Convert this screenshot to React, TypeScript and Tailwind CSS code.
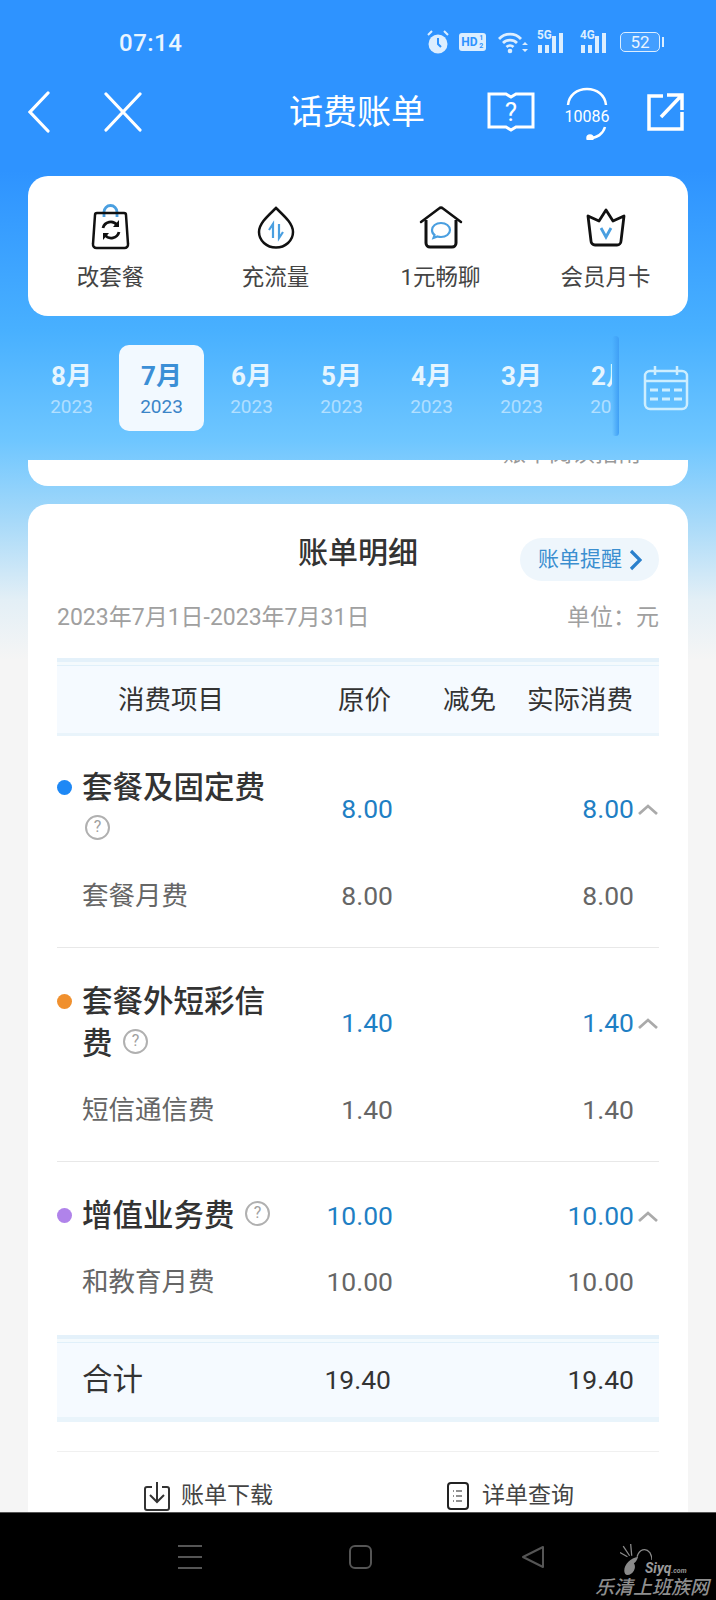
import React from 'react';

const months = [
  { m: '8月', y: '2023' },
  { m: '7月', y: '2023', active: true },
  { m: '6月', y: '2023' },
  { m: '5月', y: '2023' },
  { m: '4月', y: '2023' },
  { m: '3月', y: '2023' },
  { m: '2月', y: '2023' },
];

const Help = () => (
  <span className="inline-flex ml-[3px] w-[25px] h-[25px] rounded-full border-2 border-[#b0b0b0] items-center justify-center text-[#a0a0a0] text-[16px] font-normal leading-none align-[8px]">?</span>
);

const Alarm = () => (
  <svg width="22" height="24" viewBox="0 0 22 24" fill="none">
    <circle cx="11" cy="14" r="9.500" fill="#dceeff" />
    <path d="M11 8v6l3 3" stroke="#2e93ff" strokeWidth="2" />
    <path d="M1 5l4-4M21 5l-4-4" stroke="#dceeff" strokeWidth="2" />
  </svg>
);

const Signal = ({ label }: { label: string }) => (
  <div className="relative w-[30px] h-[22px] flex items-end gap-[3px] pl-[1px]">
    <span className="w-[4px] h-[8px] bg-[#dceeff]" />
    <span className="w-[4px] h-[8px] bg-[#dceeff]" />
    <span className="w-[4px] h-[17px] bg-[#dceeff]" />
    <span className="w-[4px] h-[20px] bg-[#dceeff]" />
    <span className="absolute left-0 top-[-3px] text-[13px] leading-[13px] font-bold text-[#dceeff] scale-x-90 origin-left">{label}</span>
  </div>
);

const BagIcon = () => (
  <svg width="40" height="46" viewBox="0 0 40 46" fill="none">
    <path d="M13 13V8a6.500 6.500 0 0 1 13 0v5" stroke="#4a9fe0" strokeWidth="2.800" />
    <path d="M6 9h27a2 2 0 0 1 2 2l2 29a3.500 3.500 0 0 1-3.500 4H5.500A3.500 3.500 0 0 1 2 40l2-29a2 2 0 0 1 2-2z" stroke="#111" strokeWidth="2.500" />
    <path d="M12 24a8 8 0 0 1 14-3M28 28a8 8 0 0 1-14 3" stroke="#111" strokeWidth="2.800" />
    <path d="M28 16v7h-6zM12 36v-7h6z" fill="#111" />
  </svg>
);

const DropIcon = () => (
  <svg width="38" height="44" viewBox="0 0 38 44" fill="none">
    <path d="M19 3C12 10 2 18 2 27a17 15.500 0 0 0 34 0C36 18 26 10 19 3z" stroke="#111" strokeWidth="2.500" />
    <path d="M16 33V19l-4 6M22 19v14l4-6" stroke="#4a9fe0" strokeWidth="2.200" />
  </svg>
);

const HouseIcon = () => (
  <svg width="44" height="44" viewBox="0 0 44 44" fill="none">
    <path d="M2 17L20 3.500a3 3 0 0 1 4 0L42 17" stroke="#111" strokeWidth="2.500" strokeLinecap="round" />
    <path d="M7 15v23a4 4 0 0 0 4 4h22a4 4 0 0 0 4-4V15" stroke="#111" strokeWidth="3" />
    <path d="M22 18c-5 0-9 3-9 7 0 2 1 4 2.500 5l-1 3 4-1.500c1 .3 2 .5 3.500.5 5 0 9-3 9-7s-4-7-9-7z" stroke="#4a9fe0" strokeWidth="2.200" />
  </svg>
);

const CrownIcon = () => (
  <svg width="42" height="40" viewBox="0 0 42 40" fill="none">
    <path d="M21 3l7 11 11-5-3 25a4 4 0 0 1-4 4H10a4 4 0 0 1-4-4L3 9l11 5z" stroke="#111" strokeWidth="2.800" strokeLinejoin="round" />
    <path d="M16 21l5 9 5-9" stroke="#4a9fe0" strokeWidth="2.800" />
  </svg>
);

const quick = [
  { label: '改套餐', icon: <BagIcon /> },
  { label: '充流量', icon: <DropIcon /> },
  { label: '1元畅聊', icon: <HouseIcon /> },
  { label: '会员月卡', icon: <CrownIcon /> },
];

const Caret = () => (
  <svg width="25" height="14" viewBox="0 0 25 14" fill="none" stroke="#aaaaaa" strokeWidth="2.800">
    <path d="M5 12l9-8 9 8" />
  </svg>
);

const Row = ({ dot, name, price, actual, sub, subPrice, subActual }: { dot: string; name: string; price: string; actual: string; sub: string; subPrice: string; subActual: string }) => (
  <div>
    <div className="flex items-center">
      <div className="w-[25px] self-start pt-[13px]"><div className={`w-[15px] h-[15px] rounded-full ${dot}`} /></div>
      <div className="w-[191px] text-[30.500px] leading-[42px] font-medium text-[#333333]">{name} <Help /></div>
      <div className="w-[120px] text-right text-[26.500px] text-[#1f7fc4]">{price}</div>
      <div className="flex-1 text-right text-[26.500px] text-[#1f7fc4]">{actual}</div>
      <Caret />
    </div>
    <div className="flex items-center mt-[24px] h-[42px] text-[26.500px] text-[#666666]">
      <div className="w-[25px]" />
      <div className="w-[191px]">{sub}</div>
      <div className="w-[120px] text-right">{subPrice}</div>
      <div className="flex-1 text-right pr-[25px]">{subActual}</div>
    </div>
  </div>
);

export default function App() {
  return (
    <div className="relative w-[716px] h-[1600px] overflow-hidden flex flex-col bg-[linear-gradient(180deg,#2e93ff_0px,#2e93ff_170px,#48b0ff_330px,#6ec6ff_440px,#a6d9f9_520px,#e3eff6_600px,#f5f5f5_660px)] font-['Roboto','Noto_Sans_CJK_SC',sans-serif]">
      {/* status bar */}
      <div className="h-[84px] shrink-0 flex items-center pl-[119px] pr-[52px] text-[#eaf5ff]">
        <span className="text-[24px] font-medium tracking-[0.5px] mt-[1px]">07:14</span>
        <div className="ml-auto flex items-center">
          <Alarm />
          <span className="ml-[10px] w-[27px] h-[18px] bg-[#dceeff] rounded-[3px] text-[#2e93ff] flex items-center justify-center gap-[1px] font-bold">
            <span className="text-[12px] leading-none">HD</span>
            <span className="text-[7px] leading-[8px] w-[5px] text-center">1<br />2</span>
          </span>
          <svg className="ml-[12px]" width="30" height="24" viewBox="0 0 30 24" fill="none">
            <path d="M1 9a15 15 0 0 1 22 0M5 13a10 10 0 0 1 14 0M8.500 17a5 5 0 0 1 7 0" stroke="#dceeff" strokeWidth="2.800" />
            <circle cx="12" cy="21" r="2.300" fill="#dceeff" />
            <path d="M24 15l3-3 3 3zM24 19l3 3 3-3z" fill="#dceeff" />
          </svg>
          <div className="ml-[9px]"><Signal label="5G" /></div>
          <div className="ml-[13px]"><Signal label="4G" /></div>
          <div className="ml-[10px] w-[40px] h-[20px] border border-[#dceeff] rounded-[5px] bg-white/10 text-[17px] leading-[18px] text-center">52</div>
          <span className="ml-[2px] w-[2px] h-[10px] bg-[#dceeff]" />
        </div>
      </div>

      {/* nav */}
      <div className="h-[56px] shrink-0 flex items-center text-white relative">
        <svg className="ml-[28px]" width="22" height="42" viewBox="0 0 22 42" fill="none" stroke="white" strokeWidth="3.200" strokeLinecap="round">
          <path d="M20 2L2 21l18 19" />
        </svg>
        <svg className="ml-[54px]" width="38" height="40" viewBox="0 0 38 40" fill="none" stroke="white" strokeWidth="3.200" strokeLinecap="round">
          <path d="M2 2l34 36M36 2L2 38" />
        </svg>
        <span className="absolute left-[289px] top-[1px] text-[34px] leading-[54px]">话费账单</span>
        <div className="ml-auto flex items-center pr-[32px]">
          <svg width="48" height="42" viewBox="0 0 48 42" fill="none" stroke="white" strokeWidth="3">
            <path d="M2 3h17l5 3 5-3h17v33H29l-5 3-5-3H2z" />
            <text x="24" y="30" fontSize="26" textAnchor="middle" fill="white" stroke="none">?</text>
          </svg>
          <svg className="ml-[27px]" width="50" height="56" viewBox="0 0 50 56" fill="none" stroke="white" strokeWidth="2.500">
            <path d="M6 21C7 11 15 5 25 5s18 6 19 16M43 43c-2 7-8 11-15 11" />
            <circle cx="28" cy="54" r="2.500" fill="white" />
            <text x="25" y="38" fontSize="16" textAnchor="middle" fill="white" stroke="none">10086</text>
          </svg>
          <svg className="ml-[34px]" width="38" height="40" viewBox="0 0 38 40" fill="none" stroke="white" strokeWidth="3.500">
            <path d="M17 4H3v33h33V20M15 25L35 4M21 3h15v15" />
          </svg>
        </div>
      </div>

      {/* quick actions */}
      <div className="mx-[28px] mt-[36px] h-[140px] shrink-0 bg-white rounded-[20px] grid grid-cols-4">
        {quick.map((q) => (
          <div key={q.label} className="flex flex-col items-center pt-[28px]">
            <div className="h-[46px] flex items-center">{q.icon}</div>
            <span className="mt-[11px] text-[22.500px] leading-[32px] text-[#444444]">{q.label}</span>
          </div>
        ))}
      </div>

      {/* month tabs */}
      <div className="h-[144px] shrink-0 flex pt-[29px] pl-[29px] relative">
        <div className="w-[583px] h-[86px] overflow-hidden flex gap-[5px]">
          {months.map((x) => (
            <div key={x.m} className={`w-[85px] h-[86px] shrink-0 rounded-[10px] flex flex-col items-center pt-[14px] ${x.active ? 'bg-[#f2f9ff]' : ''}`}>
              <span className={`text-[26px] leading-[34px] font-bold ${x.active ? 'text-[#3b8fd6]' : 'text-[#e6f5ff]'}`}>{x.m}</span>
              <span className={`text-[19px] leading-[26px] mt-[1px] ${x.active ? 'text-[#3b85c8]' : 'text-white/50'}`}>{x.y}</span>
            </div>
          ))}
        </div>
        <div className="absolute left-[612px] top-[20px] w-[7px] h-[100px] rounded-full bg-gradient-to-r from-transparent to-[#3f9ff5]" />
        <svg className="absolute left-[643px] top-[49px]" width="46" height="46" viewBox="0 0 46 46" fill="none" stroke="#cdeeff" strokeWidth="2.500">
          <rect x="2" y="6" width="42" height="38" rx="5" />
          <path d="M2 16h42M12 1v9M34 1v9" />
          <path d="M7 25h8M19 25h8M31 25h8M7 34h8M19 34h8M31 34h8" strokeWidth="3" />
        </svg>
      </div>

      {/* scrolled-away card */}
      <div className="mx-[28px] h-[26px] shrink-0 bg-white rounded-b-[20px] overflow-hidden flex justify-end pr-[47px]">
        <span className="text-[23px] leading-[32px] text-[#999999] mt-[-22px]">账单阅读指南</span>
      </div>

      {/* bill details */}
      <div className="mx-[28px] mt-[18px] flex-1 min-h-0 overflow-hidden bg-white rounded-t-[20px] px-[29px]">
        <div className="h-[96px] relative flex items-start justify-center pt-[28px]">
          <span className="text-[30px] leading-[42px] font-medium text-[#333333]">账单明细</span>
          <div className="absolute right-0 top-[34px] w-[139px] h-[43px] rounded-full bg-[#eef6fc] flex items-center pl-[18px] gap-[7px] text-[#3b8fd0] text-[21px]">
            账单提醒
            <svg width="13" height="22" viewBox="0 0 13 22" fill="none" stroke="#2a80cc" strokeWidth="3.200">
              <path d="M2 2l9 9-9 9" />
            </svg>
          </div>
        </div>
        <div className="flex justify-between items-center h-[36px] text-[23px] text-[#a0a0a0]">
          <span>2023年7月1日-2023年7月31日</span>
          <span>单位：元</span>
        </div>
        <div className="mt-[22px]">
          <div className="h-[4px] bg-[#e4f1fa]" />
          <div className="h-[3px] bg-[#f4fafd]" />
          <div className="h-[68px] bg-[#f5faff] border-t border-[#e0f0fa] flex items-center text-[26.500px] text-[#333333]">
            <span className="w-[281px] pl-[61px]">消费项目</span>
            <span className="w-[105px]">原价</span>
            <span className="w-[84px]">减免</span>
            <span>实际消费</span>
          </div>
          <div className="h-[3px] bg-[#e9f4fb]" />
        </div>
        <div className="pt-[31px] pb-[30px] border-b border-[#e8e8e8]">
          <Row dot="bg-[#1e88f5]" name="套餐及固定费" price="8.00" actual="8.00" sub="套餐月费" subPrice="8.00" subActual="8.00" />
        </div>
        <div className="pt-[33px] pb-[30px] border-b border-[#e8e8e8]">
          <Row dot="bg-[#f0902e]" name="套餐外短彩信费" price="1.40" actual="1.40" sub="短信通信费" subPrice="1.40" subActual="1.40" />
        </div>
        <div className="pt-[33px]">
          <Row dot="bg-[#b083ea]" name="增值业务费" price="10.00" actual="10.00" sub="和教育月费" subPrice="10.00" subActual="10.00" />
        </div>
        <div className="mt-[32px]">
          <div className="h-[4px] bg-[#e4f1fa]" />
          <div className="h-[3px] bg-[#f4fafd]" />
          <div className="h-[75px] bg-[#f5faff] border-t border-[#e0f0fa] flex items-center text-[#333333]">
            <span className="w-[200px] pl-[25px] text-[30.500px]">合计</span>
            <span className="w-[134px] text-right text-[26.500px]">19.40</span>
            <span className="flex-1 text-right text-[26.500px] pr-[25px]">19.40</span>
          </div>
          <div className="h-[5px] bg-[#e9f4fb]" />
        </div>
        <div className="mt-[29px] border-t border-[#f0f0f0] flex pt-[27px] text-[23px] leading-[34px] text-[#444444]">
          <div className="w-[390px] flex items-center pl-[87px] gap-[11px]">
            <svg width="26" height="30" viewBox="0 0 26 30" fill="none" stroke="#333" strokeWidth="2">
              <path d="M8 6H3a2 2 0 0 0-2 2v19a2 2 0 0 0 2 2h20a2 2 0 0 0 2-2V8a2 2 0 0 0-2-2h-5" />
              <path d="M13 1v19M6 14l7 7 7-7" />
            </svg>
            账单下载
          </div>
          <div className="flex items-center gap-[13px]">
            <svg width="22" height="28" viewBox="0 0 22 28" fill="none" stroke="#222" strokeWidth="2">
              <rect x="1" y="1" width="20" height="26" rx="3" />
              <path d="M9 9h6M9 14h6M9 19h6M6 9h1M6 14h1M6 19h1" strokeWidth="1.200" />
            </svg>
            详单查询
          </div>
        </div>
      </div>

      {/* system nav */}
      <div className="h-[88px] shrink-0 bg-black border-t border-[#555555] relative flex items-center">
        <div className="ml-[178px] w-[24px] h-[24px] flex flex-col justify-between">
          <span className="h-[2px] bg-[#555555]" />
          <span className="h-[2px] bg-[#555555]" />
          <span className="h-[2px] bg-[#555555]" />
        </div>
        <div className="ml-[147px] w-[23px] h-[24px] rounded-[6px] border-2 border-[#555555]" />
        <svg className="ml-[149px]" width="24" height="24" viewBox="0 0 24 24" fill="none" stroke="#555555" strokeWidth="2">
          <path d="M22 2v20L2 12z" strokeLinejoin="round" />
        </svg>
        {/* watermark */}
        <svg className="absolute left-[620px] top-[31px]" width="32" height="32" viewBox="0 0 30 30" fill="none" stroke="#8a8a8a" strokeWidth="1.200">
          <path d="M16 12C18 5 24 3 28 8c1 2 2 4 2 7M3 2l6 9M0 8l7 4M10 0l1 11" />
          <path d="M4 25c0-6 6-12 13-13-1 3-2 5-4 6 3 4-1 11-6 11-2 0-3-2-3-4z" fill="#8a8a8a" stroke="none" />
        </svg>
        <span className="absolute left-[645px] top-[47px] text-[14px] leading-[16px] font-bold italic text-[#9a9a9a] whitespace-nowrap">Siyq<span className="text-[7px]">.com</span></span>
        <span className="absolute left-[595px] top-[64px] text-[19px] leading-[22px] font-medium italic text-[#8f8f8f] whitespace-nowrap">乐清上班族网</span>
      </div>
    </div>
  );
}
